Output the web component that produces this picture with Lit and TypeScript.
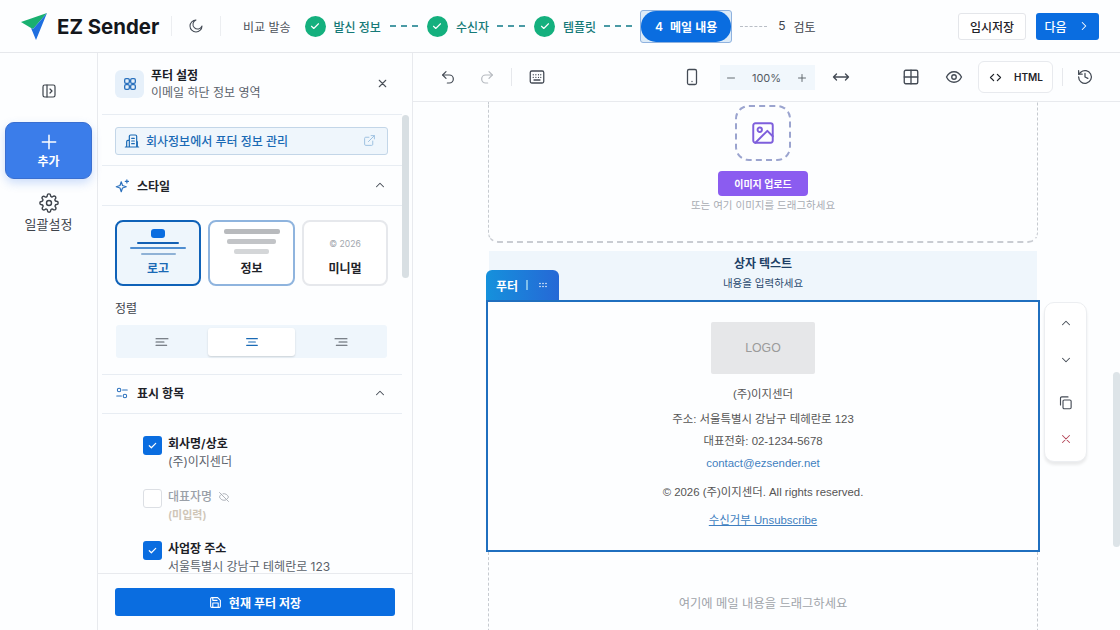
import { LitElement, html, css, svg } from "lit";
import { customElement } from "lit/decorators.js";

const ic = (body: unknown, size = 16, sw = 2) => html`<svg width=${size} height=${size} viewBox="0 0 24 24" fill="none" stroke="currentColor" stroke-width=${sw} stroke-linecap="round" stroke-linejoin="round">${body}</svg>`;
const check = svg`<path d="M5 12.5l4.5 4.5L19 7.5"/>`;
const up = svg`<path d="M6 15l6-6 6 6"/>`;
const down = svg`<path d="M6 9l6 6 6-6"/>`;
const x = svg`<path d="M6 6l12 12M18 6L6 18"/>`;

@customElement("app-root")
export class AppRoot extends LitElement {
  static styles = css`
    :host { display: block; width: 1120px; height: 630px; overflow: hidden; background: #fdfeff; color: #1f2329;
      font-family: Inter, "Noto Sans CJK KR", sans-serif; font-size: 12px; }
    * { box-sizing: border-box; }
    .top { height: 53px; display: flex; align-items: center; border-bottom: 1px solid #e6e8ec; padding-left: 20px; }
    .logo { display: flex; margin-right: 9px; }
    .brand { font-size: 20.4px; font-weight: 700; color: #14171c; width: 103px; white-space: nowrap; }
    .vd { width: 1px; height: 20px; background: #eceef1; }
    .vd.first { margin-left: 11px; }
    .moon { margin: 0 16px; display: flex; color: #444b55; }
    .compare { margin-left: 22px; width: 52.5px; color: #4b5159; white-space: nowrap; }
    .done { width: 21px; height: 21px; border-radius: 50%; background: #14b07e; color: #fff; display: flex; align-items: center; justify-content: center; margin-left: 9px; flex: none; }
    .lab { color: #167a78; font-weight: 500; margin-left: 8px; white-space: nowrap; }
    .dash { width: 28px; margin-left: 8px; border-top: 2px dashed #4a9aa5; }
    .dash.wide { margin-left: 9px; }
    .dash.off { width: 27px; border-top: 1px dashed #b9bec6; margin-left: 8px; }
    .curwrap { width: 92px; height: 33px; margin-left: 8px; border: 1px solid #8fb2df; border-radius: 3px; background: #dcebf8; flex: none; }
    .cur { width: 100%; height: 100%; background: #0a6de0; color: #fff; border-radius: 15px; display: flex; align-items: center; justify-content: center; gap: 7px; font-weight: 600; white-space: nowrap; }
    .next5 { margin-left: 11px; color: #3f454d; display: flex; gap: 8px; white-space: nowrap; }
    .spacer { flex: 1; }
    .btn { height: 27px; border-radius: 3px; display: flex; align-items: center; justify-content: center; font-weight: 500; white-space: nowrap; }
    .save { width: 68px; border: 1px solid #e4e6ea; background: #fff; color: #1f2329; }
    .go { width: 63px; margin: 0 21px 0 10px; background: #0a6de0; color: #fff; gap: 10px; }

    .main { display: flex; height: 577px; }
    .rail { width: 98px; border-right: 1px solid #e8eaee; display: flex; flex-direction: column; align-items: center; padding-top: 30px; flex: none; color: #3d434b; }
    .railicon { height: 39px; display: flex; }
    .add { width: 87px; height: 57px; background: #3b7dea; color: #fff; border-radius: 9px; border: 1px solid #3a6fd0; box-shadow: 0 4px 10px rgba(59,125,234,.25); display: flex; flex-direction: column; align-items: center; justify-content: center; font-weight: 600; margin-bottom: 14px; }
    .bulk { display: flex; flex-direction: column; align-items: center; gap: 1px; color: #3d434b; font-size: 13px; }

    .panel { width: 315px; border-right: 1px solid #e8eaee; flex: none; display: flex; flex-direction: column; position: relative; }
    .pscroll { flex: 1; min-height: 0; overflow: hidden; width: 304px; padding-left: 4px; }
    .phead { height: 62px; display: flex; align-items: center; padding-left: 13px; border-bottom: 1px solid #e8edf3; }
    .picon { width: 29px; height: 28px; border-radius: 6px; background: #e6f0fa; color: #2a70bd; display: flex; align-items: center; justify-content: center; margin-right: 7px; }
    .ptitle { font-weight: 700; line-height: 17px; color: #1c2026; }
    .psub { color: #5b626b; font-size: 12px; line-height: 17px; }
    .pclose { margin-left: auto; margin-right: 13px; display: flex; color: #4a5058; }
    .manage { margin: 12px 14px 0 13px; height: 28px; border: 1px solid #c3d6e8; border-radius: 3px; background: #eff6fc; color: #1a6ab5; display: flex; align-items: center; padding: 0 11px 1px 8px; gap: 6px; font-weight: 500; }
    .manage svg:last-child { margin-left: auto; color: #9cc0e0; }
    .sec { margin-top: 10px; height: 41px; border-top: 1px solid #e8edf3; border-bottom: 1px solid #e8edf3; display: flex; align-items: center; padding: 0 15px 1px 13px; gap: 6px; font-weight: 600; color: #1f2329; }
    .sec.second { margin-top: 16px; height: 40px; padding-bottom: 3px; }
    .sec .i { color: #2a70bd; display: flex; width: 16px; }
    .sec .c { margin-left: auto; display: flex; color: #444b55; }
    .cards { display: grid; grid-template-columns: 86px 87px 86px; gap: 7px; margin: 14px 0 0 13px; }
    .card { height: 66px; border: 2px solid #e6e8ec; border-radius: 8px; background: #fff; display: flex; flex-direction: column; align-items: center; font-weight: 600; color: #1f2329; padding-top: 7px; }
    .card.on { border-color: #0f62b8; background: #eef6fc; color: #1a6ab5; }
    .card.mid { border-color: #8fb4de; }
    .art { height: 30px; display: flex; flex-direction: column; align-items: center; gap: 4px; }
    .art.wide { gap: 5px; }
    .b { border-radius: 2px; }
    .copy { color: #a2a7ae; font-size: 8.6px; font-weight: 400; line-height: 30px; }
    .alignl { color: #3f454d; margin: 14px 0 0 13px; line-height: 17px; }
    .seg { margin: 8px 0 0 14px; width: 271px; height: 33px; background: #eff6fc; border-radius: 3px; display: grid; grid-template-columns: 92px 87px 92px; align-items: center; justify-items: center; color: #555b63; }
    .seg > span { display: flex; }
    .seg .on { width: 87px; height: 28px; background: #fff; border-radius: 3px; box-shadow: 0 1px 2px rgba(0,0,0,.15); align-items: center; justify-content: center; color: #1a6ab5; }
    .itemgap { height: 21px; }
    .item { display: flex; gap: 6px; margin-left: 41px; height: 52.5px; align-items: flex-start; }
    .cb { width: 19px; height: 19px; border-radius: 3px; background: #0a6de0; color: #fff; display: flex; align-items: center; justify-content: center; margin-top: 1px; flex: none; }
    .cb.off { background: #fff; border: 1px solid #dcdfe4; }
    .it { font-weight: 600; line-height: 18px; color: #1c2026; display: flex; align-items: center; gap: 6px; }
    .is { color: #5b626b; line-height: 18px; }
    .dim .it { color: #9aa0a8; font-weight: 500; }
    .dim .is { color: #cfc6b8; font-weight: 600; font-size: 11px; }
    .pfoot { height: 57px; flex: none; border-top: 1px solid #e8eaee; padding: 14px 17px 0 17px; }
    .savebtn { height: 28px; background: #0a6de0; color: #fff; border-radius: 3px; display: flex; align-items: center; justify-content: center; gap: 7px; font-weight: 600; }
    .sb { position: absolute; right: 3px; top: 62px; width: 7px; height: 163px; border-radius: 4px; background: #d8dfe3; }

    .work { flex: 1; min-width: 0; position: relative; display: flex; flex-direction: column; overflow: hidden; }
    .tools { height: 49px; flex: none; border-bottom: 1px solid #e8eaee; display: flex; align-items: center; color: #444b55; position: relative; }
    .tb { display: flex; position: absolute; top: 50%; transform: translate(-50%, -50%); }
    .redo { color: #b6bac0; }
    .zoom { position: absolute; left: 307px; top: 12px; width: 95px; height: 25px; background: #f1f7fc; display: flex; align-items: center; justify-content: space-between; padding: 0 7px 0 5px; font-size: 11px; color: #555b63; }
    .html { position: absolute; left: 565px; top: 8px; width: 75px; height: 32px; border: 1px solid #e8eaee; border-radius: 6px; background: #fff; display: flex; align-items: center; justify-content: center; gap: 11px; font-size: 10px; font-weight: 600; color: #1f2329; }
    .tvd { position: absolute; width: 1px; height: 18px; top: 15px; background: #e6e8ec; }
    .canvas { flex: 1; min-height: 0; padding-left: 75px; position: relative; }
    .column { width: 550px; display: flex; flex-direction: column; align-items: stretch; }
    .up { height: 141px; border: 1px dashed #c6cad0; border-top: none; border-bottom: 2px dashed #c9ccd2; border-radius: 0 0 10px 10px; display: flex; flex-direction: column; align-items: center; }
    .ph { width: 56px; height: 56px; margin-top: 3px; border: 2px dashed #9ba4cf; border-radius: 14px; display: flex; align-items: center; justify-content: center; color: #7e5fdc; }
    .upl { margin-top: 10px; width: 90px; height: 25px; border-radius: 4px; background: #8b5cf0; color: #fff; font-size: 10px; font-weight: 700; display: flex; align-items: center; justify-content: center; }
    .hint { margin-top: 1px; font-size: 10.5px; color: #a8acb3; line-height: 17px; }
    .box { margin: 8px 1px 0; height: 49px; background: #eff6fc; display: flex; flex-direction: column; align-items: center; padding-top: 3px; color: #2b4a6f; }
    .box b { font-weight: 700; line-height: 19px; color: #1d3f66; }
    .box span { font-size: 10.5px; line-height: 22px; }
    .foot { width: 554px; margin-left: -2px; height: 252px; border: 2px solid #1f6fbf; display: flex; flex-direction: column; align-items: center; background: #fdfeff; position: relative;
      font-family: "Liberation Sans", "Noto Sans CJK KR", sans-serif; color: #555; font-size: 11.4px; padding-top: 20px; }
    .tab { position: absolute; left: -2px; top: -32px; width: 73px; height: 30px; border-radius: 6px 6px 0 0; background: linear-gradient(90deg, #1591dc, #2668d6); color: #fff; display: flex; align-items: center; padding-left: 10px; gap: 8px; font-weight: 700; font-size: 12px; font-family: Inter, "Noto Sans CJK KR", sans-serif; }
    .tab i { width: 2px; height: 10px; background: #7fbfeb; margin-right: 1px; }
    .lg { width: 104px; height: 52px; border-radius: 2px; background: #e6e7e9; color: #9a9a9a; font-size: 12.3px; display: flex; align-items: center; justify-content: center; margin-bottom: 11px; }
    .foot p { margin: 0; line-height: 18px; }
    .foot .r { margin-top: 4px; }
    .foot .addr { margin-top: 7px; }
    .foot .cp { margin-top: 11px; }
    .foot .un { margin-top: 10px; }
    .foot a { color: #3f7fc0; }
    .foot .un a { text-decoration: underline; }
    .dropnext { height: 90px; border: 1px dashed #c6cad0; border-top: none; display: flex; justify-content: center; padding-top: 42px; font-size: 12.3px; color: #a0a4aa; font-family: "Liberation Sans", "Noto Sans CJK KR", sans-serif; }
    .acts { position: absolute; left: 631px; top: 200px; width: 43px; height: 160px; background: #fff; border: 1px solid #eceef1; border-radius: 10px; box-shadow: 0 3px 3px rgba(0,0,0,.08); display: flex; flex-direction: column; align-items: center; padding-top: 13px; color: #444b55; }
    .acts span { height: 14px; margin-bottom: 23px; display: flex; align-items: center; }
    .acts span:nth-child(2) { margin-bottom: 28px; }
    .acts .del { color: #b5485a; }
    .csb { position: absolute; right: 0; top: 270px; width: 7px; height: 175px; border-radius: 4px; background: #dde4e8; }
  `;

  private step(label: string, wide = false) {
    return html`<div class="done">${ic(check, 12, 2.2)}</div><div class="lab">${label}</div><div class="dash ${wide ? "wide" : ""}"></div>`;
  }

  private item(title: string, sub: string, on = true) {
    return html`<div class="item ${on ? "" : "dim"}">
      <div class="cb ${on ? "" : "off"}">${on ? ic(check, 11, 2.6) : ""}</div>
      <div><div class="it">${title}${on ? "" : ic(svg`<path d="M3 3l18 18M10 5.5c5-1 9 2 11 6.500-.6 1.300-1.400 2.500-2.400 3.400M6.500 7C4.700 8.200 3.500 10 3 12c2 5 7 8 12.500 6"/>`, 12, 1.6)}</div><div class="is">${sub}</div></div>
    </div>`;
  }

  render() {
    return html`
      <header class="top">
        <div class="logo"><svg width="28" height="28" viewBox="0 0 28 28"><path d="M1 10 27 1 13 17 11 16z" fill="#19b070"/><path d="M27 1 16 28 11 16 13 17z" fill="#1f6fe0"/></svg></div>
        <div class="brand">EZ Sender</div>
        <div class="vd first"></div>
        <div class="moon">${ic(svg`<path d="M12 3a7 7 0 1 0 9 9 9 9 0 1 1-9-9z"/>`, 16, 1.6)}</div>
        <div class="vd"></div>
        <div class="compare">비교 발송</div>
        ${this.step("발신 정보", true)}
        ${this.step("수신자")}
        ${this.step("템플릿")}
        <div class="curwrap"><div class="cur"><span>4</span><span>메일 내용</span></div></div>
        <div class="dash off"></div>
        <div class="next5"><span>5</span><span>검토</span></div>
        <div class="spacer"></div>
        <div class="btn save">임시저장</div>
        <div class="btn go">다음 ${ic(svg`<path d="M9 6l6 6-6 6"/>`, 14, 1.8)}</div>
      </header>
      <div class="main">
        <nav class="rail">
          <div class="railicon">${ic(svg`<rect x="3" y="3" width="18" height="18" rx="2.500"/><path d="M9 3v18M13.500 9l3 3-3 3"/>`, 16, 1.8)}</div>
          <div class="add">${ic(svg`<path d="M12 4v16M4 12h16"/>`, 20, 1.8)}<span>추가</span></div>
          <div class="bulk">${ic(svg`<circle cx="12" cy="12" r="3"/><path d="M19.400 15a1.650 1.650 0 0 0 .33 1.820l.06.06a2 2 0 1 1-2.830 2.830l-.06-.06a1.650 1.650 0 0 0-2.800 1.170V21a2 2 0 0 1-4 0v-.09a1.650 1.650 0 0 0-2.800-1.170l-.06.06a2 2 0 1 1-2.830-2.830l.06-.06a1.650 1.650 0 0 0-1.170-2.800H3a2 2 0 0 1 0-4h.09a1.650 1.650 0 0 0 1.170-2.800l-.06-.06a2 2 0 1 1 2.830-2.830l.06.06a1.650 1.650 0 0 0 2.800-1.170V3a2 2 0 0 1 4 0v.09a1.650 1.650 0 0 0 2.800 1.170l.06-.06a2 2 0 1 1 2.830 2.830l-.06.06a1.650 1.650 0 0 0 1.170 2.800H21a2 2 0 0 1 0 4h-.09a1.650 1.650 0 0 0-1.510 1z"/>`, 20, 1.7)}<span>일괄설정</span></div>
        </nav>
        <aside class="panel">
          <div class="pscroll">
            <div class="phead">
              <div class="picon">${ic(svg`<rect x="4" y="4" width="7" height="7" rx="2"/><rect x="13" y="4" width="7" height="7" rx="2"/><rect x="4" y="13" width="7" height="7" rx="2"/><rect x="13" y="13" width="7" height="7" rx="2"/>`, 16, 2)}</div>
              <div><div class="ptitle">푸터 설정</div><div class="psub">이메일 하단 정보 영역</div></div>
              <div class="pclose">${ic(x, 13, 2)}</div>
            </div>
            <div class="manage">${ic(svg`<path d="M8 21V5a2 2 0 0 1 2-2h7a2 2 0 0 1 2 2v16M4 21v-8a2 2 0 0 1 2-2h2M20 21v-8h-1M2 21h20M11.500 8h4M11.500 12h4M11.500 16h4"/>`, 16, 1.8)}<span>회사정보에서 푸터 정보 관리</span>${ic(svg`<path d="M18 13v6a2 2 0 0 1-2 2H5a2 2 0 0 1-2-2V8a2 2 0 0 1 2-2h6M15 3h6v6M10 14 21 3"/>`, 13, 1.8)}</div>
            <div class="sec"><span class="i">${ic(svg`<path d="M10 6l2 6 6 2-6 2-2 6-2-6-6-2 6-2z"/><path d="M19 3v5M16.500 5.500h5"/>`, 15, 1.9)}</span>스타일<span class="c">${ic(up, 14, 1.8)}</span></div>
            <div class="cards">
              <div class="card on"><div class="art">
                <div class="b" style="width:14px;height:9px;background:#0a6de0;border-radius:3px;margin-bottom:1px"></div>
                <div class="b" style="width:42px;height:2px;background:#1260b4;margin-top:-1px"></div>
                <div class="b" style="width:56px;height:2px;background:#4f8ed0;margin-top:-1px"></div>
                <div class="b" style="width:35px;height:2px;background:#8fb2d6"></div>
              </div>로고</div>
              <div class="card mid"><div class="art wide">
                <div class="b" style="width:56px;height:5px;background:#b8babd"></div>
                <div class="b" style="width:49px;height:5px;background:#c2c4c7"></div>
                <div class="b" style="width:35px;height:5px;background:#d4d6d8"></div>
              </div>정보</div>
              <div class="card"><div class="art"><span class="copy">© 2026</span></div>미니멀</div>
            </div>
            <div class="alignl">정렬</div>
            <div class="seg">
              <span>${ic(svg`<path d="M3 7h18M3 12h12M3 17h16"/>`, 16, 1.6)}</span>
              <span class="on">${ic(svg`<path d="M4 7h16M7 12h10M4 17h16"/>`, 16, 1.8)}</span>
              <span>${ic(svg`<path d="M3 7h18M9 12h12M5 17h16"/>`, 16, 1.6)}</span>
            </div>
            <div class="sec second"><span class="i">${ic(svg`<circle cx="7" cy="7" r="3"/><path d="M13 7h8M3 17h8"/><circle cx="17" cy="17" r="3"/>`, 14, 1.8)}</span>표시 항목<span class="c">${ic(up, 14, 1.8)}</span></div>
            <div class="itemgap"></div>
            ${this.item("회사명/상호", "(주)이지센더")}
            ${this.item("대표자명", "(미입력)", false)}
            ${this.item("사업장 주소", "서울특별시 강남구 테헤란로 123")}
          </div>
          <div class="pfoot"><div class="savebtn">${ic(svg`<path d="M19 21H5a2 2 0 0 1-2-2V5a2 2 0 0 1 2-2h11l5 5v11a2 2 0 0 1-2 2z"/><path d="M17 21v-8H7v8M7 3v5h8"/>`, 13, 2)}<span>현재 푸터 저장</span></div></div>
          <div class="sb"></div>
        </aside>
        <section class="work">
          <div class="tools">
            <span class="tb" style="left:35px">${ic(svg`<path d="M9 14 4 9l5-5"/><path d="M4 9h10a6 6 0 0 1 0 12h-3"/>`, 16, 1.8)}</span>
            <span class="tb redo" style="left:74px">${ic(svg`<path d="M15 14l5-5-5-5"/><path d="M20 9H10a6 6 0 0 0 0 12h3"/>`, 16, 1.8)}</span>
            <div class="tvd" style="left:98px"></div>
            <span class="tb" style="left:124px">${ic(svg`<rect x="3" y="4" width="18" height="16" rx="2"/><path d="M7 9h.01M10.500 9h.01M14 9h.01M17 9h.01M7 12.500h.01M10.500 12.500h.01M14 12.500h.01M17 12.500h.01M8 16h8"/>`, 18, 1.7)}</span>
            <span class="tb" style="left:279px">${ic(svg`<rect x="6" y="2" width="12" height="20" rx="2"/><path d="M12 18h.01"/>`, 18, 1.7)}</span>
            <div class="zoom">${ic(svg`<path d="M5 12h14"/>`, 12, 1.8)}<span>100%</span>${ic(svg`<path d="M5 12h14M12 5v14"/>`, 12, 1.8)}</div>
            <span class="tb" style="left:428px">${ic(svg`<path d="M6 8l-4 4 4 4M18 8l4 4-4 4M2 12h20"/>`, 18, 1.8)}</span>
            <span class="tb" style="left:498px">${ic(svg`<rect x="3" y="3" width="18" height="18" rx="2"/><path d="M12 3v18M3 12h18"/>`, 18, 1.8)}</span>
            <span class="tb" style="left:541px">${ic(svg`<path d="M2 12s3.500-7 10-7 10 7 10 7-3.500 7-10 7-10-7-10-7z"/><circle cx="12" cy="12" r="3"/>`, 18, 1.8)}</span>
            <div class="html">${ic(svg`<path d="M9 7l-5 5 5 5M15 7l5 5-5 5"/>`, 15, 2)}<span>HTML</span></div>
            <div class="tvd" style="left:649px"></div>
            <span class="tb" style="left:672px">${ic(svg`<path d="M3 12a9 9 0 1 0 3-6.700L3 8"/><path d="M3 3v5h5M12 7v5l4 2"/>`, 17, 1.8)}</span>
          </div>
          <div class="canvas">
            <div class="column">
              <div class="up">
                <div class="ph">${ic(svg`<rect x="3" y="3" width="18" height="18" rx="2"/><circle cx="9" cy="9" r="2"/><path d="M21 15l-5-5L5 21"/>`, 26, 1.8)}</div>
                <div class="upl">이미지 업로드</div>
                <div class="hint">또는 여기 이미지를 드래그하세요</div>
              </div>
              <div class="box"><b>상자 텍스트</b><span>내용을 입력하세요</span></div>
              <div class="foot">
                <div class="tab"><span>푸터</span><i></i>${ic(svg`<path d="M6 9h.01M12 9h.01M18 9h.01M6 15h.01M12 15h.01M18 15h.01"/>`, 12, 3)}</div>
                <div class="lg">LOGO</div>
                <p>(주)이지센더</p>
                <p class="addr">주소: 서울특별시 강남구 테헤란로 123</p>
                <p class="r">대표전화: 02-1234-5678</p>
                <p class="r"><a>contact@ezsender.net</a></p>
                <p class="cp">© 2026 (주)이지센더. All rights reserved.</p>
                <p class="un"><a>수신거부 Unsubscribe</a></p>
              </div>
              <div class="dropnext">여기에 메일 내용을 드래그하세요</div>
            </div>
            <div class="acts">
              <span>${ic(up, 14, 1.8)}</span>
              <span>${ic(down, 14, 1.8)}</span>
              <span>${ic(svg`<rect x="8" y="8" width="13" height="14" rx="2"/><path d="M4 16V5a2 2 0 0 1 2-2h10"/>`, 15, 1.8)}</span>
              <span class="del">${ic(x, 14, 1.8)}</span>
            </div>
            <div class="csb"></div>
          </div>
        </section>
      </div>
    `;
  }
}
